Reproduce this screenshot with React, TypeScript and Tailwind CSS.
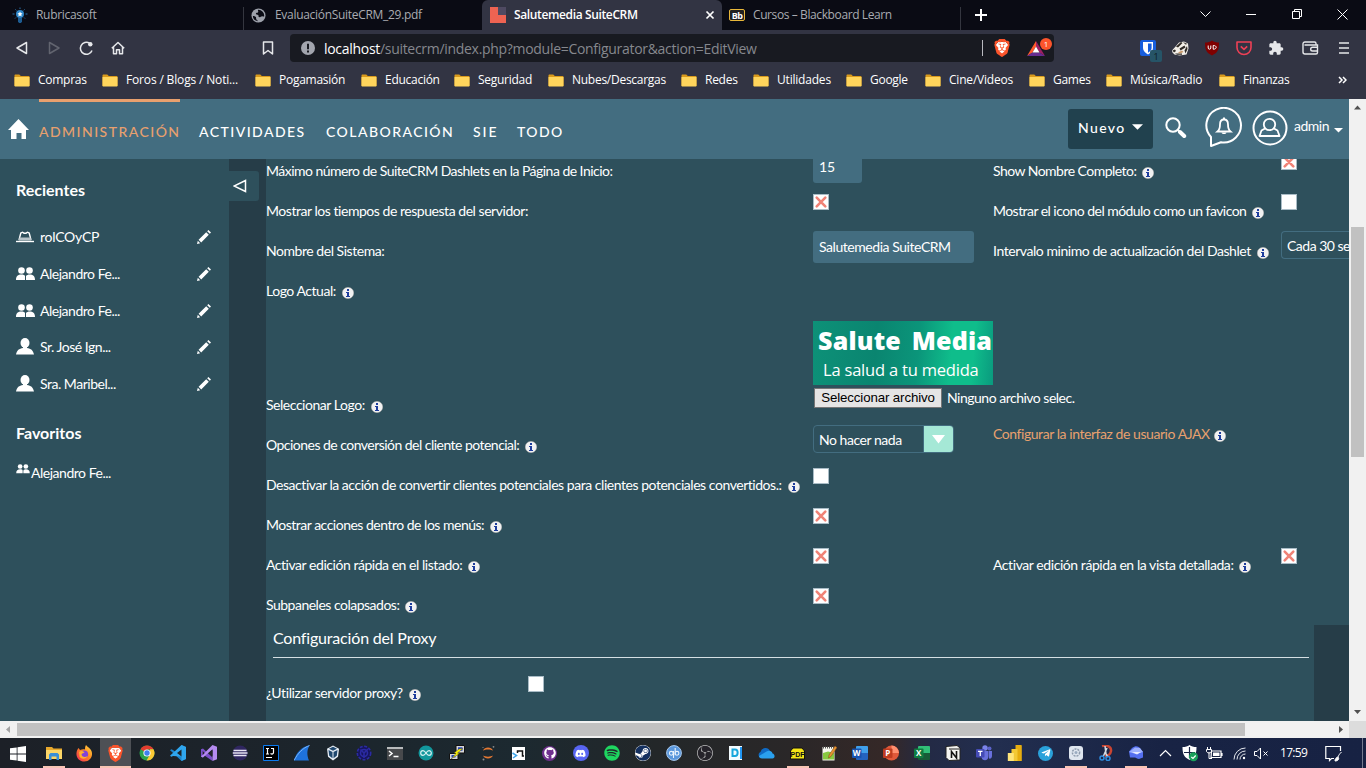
import React from "react";
import { FaWindows, FaDiscord, FaSpotify, FaSteam, FaGithub, FaTelegramPlane } from "react-icons/fa";
import { MdExtension } from "react-icons/md";
import { SiBrave, SiObsstudio } from "react-icons/si";
import { VscVscode } from "react-icons/vsc";

type Kids = { children?: React.ReactNode };

/* ---------- browser chrome ---------- */

function BraveLion({ className }: { className: string }) {
  return (
    <span className={`grid ${className}`}>
      <svg viewBox="0 0 24 24" className="col-start-1 row-start-1 size-full">
        <path d="M7 4h10l4 4-3 10-6 4-6-4L3 8z" fill="#fff" />
      </svg>
      <SiBrave className="col-start-1 row-start-1 size-full text-[#fb542b]" />
    </span>
  );
}

function TabBar() {
  return (
    <div className="flex h-[30px] bg-[#0a0b14] text-[12px] text-[#a9abb1]">
      <div className="flex w-[243px] items-center pl-3">
        <svg width="16" height="16" viewBox="0 0 16 16">
          <circle cx="8" cy="7" r="4" fill="#2f87c9" />
          <path d="M6 11h4v3.500l-1 1.500H7l-1-1.500z" fill="#1d5c92" />
          <path d="M8 4.500l.8 1.600 1.700.3-1.200 1.200.3 1.800L8 8.600l-1.600.8.3-1.800-1.200-1.200 1.700-.3z" fill="#fff" />
          <path d="M8 .5v1.500M3.400 2.400l1 1M12.600 2.400l-1 1M.5 7h2M13.500 7h2M3 11.500l1-1M13 11.500l-1-1" stroke="#2b6ea5" />
        </svg>
        <span className="ml-2 tracking-[-0.3px]">Rubricasoft</span>
      </div>
      <div className="mt-[7px] h-[23px] w-px bg-[#34363f]" />
      <div className="flex w-[238px] items-center pl-[7px]">
        <svg width="15" height="15" viewBox="0 0 16 16">
          <circle cx="8" cy="8" r="7.500" fill="#9da1ab" />
          <path d="M7.500 1.800c-.5 1.200.8 1.700 0 2.600s-2 .3-2.300 1.600c-.2 1 1.700.7 2.500 1.500s-.2 1.600.8 2.200c1 .7 2.300-1.200 3.500-1 1 .2 1.600.6 2 .3A6.300 6.300 0 0 0 7.500 1.800zM2 8.500c1 .2 2.600.2 3.200 1.200.6 1.100-.3 1.900.8 2.700.8.6 1.400.9 1.500 1.800A6.200 6.200 0 0 1 2 8.500z" fill="#0a0b14" />
        </svg>
        <span className="ml-[9px] tracking-[-0.3px]">EvaluaciónSuiteCRM_29.pdf</span>
      </div>
      <div className="flex w-[240px] items-center rounded-t-[6px] bg-[#323443] pl-2 text-white">
        <svg width="16" height="16" viewBox="0 0 16 16">
          <path d="M0 0h8v8h8v8H0z" fill="#ee6352" />
          <path d="M8 0h8v8H8z" fill="#4f4a62" />
        </svg>
        <span className="ml-2 w-[191px] font-semibold tracking-[-0.37px]">Salutemedia SuiteCRM</span>
        <svg width="10" height="10" viewBox="0 0 10 10">
          <path d="M1.500 1.500l7 7M8.500 1.500l-7 7" stroke="#fff" strokeWidth="1.700" />
        </svg>
      </div>
      <div className="flex w-[238px] items-center pl-[7px]">
        <span className="flex h-3 w-4 items-center justify-center rounded-[2px] border border-[#e8b73a] bg-[#222] text-[9px] font-bold leading-none tracking-[-0.5px] text-white">Bb</span>
        <span className="ml-2 tracking-[-0.4px]">Cursos – Blackboard Learn</span>
      </div>
      <div className="mt-[7px] h-[23px] w-px bg-[#34363f]" />
      <svg className="ml-[14px] mt-[9px]" width="12" height="12" viewBox="0 0 12 12">
        <path d="M6 0v12M0 6h12" stroke="#fff" strokeWidth="2" />
      </svg>
      <svg className="ml-auto mr-[17px] mt-2" width="150" height="12" viewBox="0 0 150 12" fill="none" stroke="#fff">
        <path d="M1.500 3.500l5 5 5-5M47 6.500h10M93.500 3.500h7v7h-7zM95.500 3.500v-2h7v7H100.500M138.500 1.500l10 10M148.500 1.500l-10 10" />
      </svg>
    </div>
  );
}

function Toolbar() {
  return (
    <div className="flex h-9 items-center bg-[#323443]">
      <svg className="ml-[14px] shrink-0" width="120" height="16" viewBox="0 0 120 16" fill="none" stroke="#e6e7ea" strokeWidth="1.500" strokeLinejoin="round">
        <path d="M12.500 2.500v11L3 8z" />
        <path d="M35.500 2.500v11L45 8z" stroke="#62646f" />
        <path d="M78 10.500a6 6 0 1 1-2.500-7.300" />
        <circle cx="76.300" cy="4.200" r="2.200" fill="#e6e7ea" stroke="none" />
        <path d="M97.800 8.300L104 2.500l6.200 5.800M99.500 7v6.800h3v-4h3v4h3V7" />
      </svg>
      <svg className="ml-[128px] shrink-0" width="12" height="14" viewBox="0 0 12 14" fill="none" stroke="#e6e7ea" strokeWidth="1.500" strokeLinejoin="round">
        <path d="M1.500 1h9v12L6 9.500 1.500 13z" />
      </svg>
      <div className="ml-4 flex h-7 w-[764px] items-center rounded-[4px] bg-[#181a21]">
        <svg className="ml-[11px]" width="14" height="14" viewBox="0 0 14 14">
          <circle cx="7" cy="7" r="7" fill="#a2a5ae" />
          <path d="M7 2.800v5.400M7 9.500v2" stroke="#181a21" strokeWidth="2" />
        </svg>
        <span className="ml-[9px] text-[14px] tracking-[-0.3px] text-[#86888e]"><span className="text-white">localhost</span>/suitecrm/index.php?module=Configurator&amp;action=EditView</span>
        <span className="ml-auto h-4 w-px bg-[#b9bac0]" />
        <BraveLion className="ml-[10px] size-[18px]" />
        <span className="relative ml-[16px] mr-[9px] h-[18px] w-[18px]">
          <svg width="18" height="18" viewBox="0 0 18 18">
            <path d="M9 2v5.500L5.500 13.500 0 17z" fill="#ff5a2b" />
            <path d="M9 2l9 15-5.500-3.500L9 7.500z" fill="#9e1f63" />
            <path d="M0 17l5.500-3.500h7L18 17z" fill="#662d91" />
            <path d="M9 7.500l3.500 6h-7z" fill="#fff" />
          </svg>
          <span className="absolute left-[13px] top-[-1px] flex size-3 items-center justify-center rounded-full bg-[#fb542b] text-[8px] leading-none text-white">1</span>
        </span>
      </div>
      <div className="ml-[86px] flex items-center">
        <span className="relative size-4">
          <svg width="16" height="16" viewBox="0 0 16 16">
            <rect width="16" height="16" rx="2" fill="#175ddc" />
            <path d="M3 2h10v6c0 3-2.500 5-5 6.500C5.500 13 3 11 3 8z" fill="#fff" />
            <path d="M8 3.500h3.600V8c0 2-1.800 3.600-3.600 4.800z" fill="#175ddc" />
          </svg>
          <span className="absolute left-[10px] top-[10px] flex size-3 items-center justify-center rounded-[2px] bg-[#265467] text-[9px] leading-none text-[#0c1a22]">1</span>
        </span>
        <svg className="ml-4" width="17" height="15" viewBox="0 0 17 15">
          <path d="M0 9.500L4 5l3-3.500L12 .5l4 2 .5 5-2 6-7 1-5-1-2-2z" fill="#f3efe9" />
          <path d="M4 5.500l5-4.500 1.500 1L6 6.500zM11 1l4.500 2-2 .5zM7.500 7.500l5-3 1 2-5 3zM.5 9.500l2.500-1 1 1.500-2 1.500zM12.500 9.500L15 5l.5 3-2 4.500zM3 12.500h7v1.200H5z" fill="#2f2a26" />
          <path d="M6 11.500l4-2 1.500 1.500-3.500 1.500z" fill="#c79668" />
        </svg>
        <svg className="ml-[15px]" width="16" height="16" viewBox="0 0 16 16">
          <path d="M8 .5c2 1.500 4 2 7 2 0 7-1 10-7 13-6-3-7-6-7-13 3 0 5-.5 7-2z" fill="#800000" />
          <path d="M4.200 5.500v2.500c0 1.600 2.600 1.600 2.600 0V5.500M9.200 5.500v3.700c4 .2 4-3.900 0-3.700z" fill="none" stroke="#fff" />
        </svg>
        <svg className="ml-4" width="16" height="16" viewBox="0 0 16 16" fill="none" stroke="#ef4056" strokeWidth="1.600" strokeLinejoin="round">
          <path d="M1 2h14v5.500a7 7 0 0 1-14 0zM4.800 6.300L8 9.300l3.200-3" />
        </svg>
        <MdExtension className="ml-4 size-4 text-[#e6e7ea]" />
        <svg className="ml-[18px]" width="17" height="16" viewBox="0 0 17 16" fill="none" stroke="#e6e7ea" strokeWidth="1.400">
          <path d="M14 5V3.500C14 2.500 13.500 2 12.500 2H3C1.500 2 1 3 1 4v8c0 1.300.7 2 2 2h11c1 0 1.500-.5 1.500-1.500V5H2.500M15.500 7.300H10.500c-1.200 0-1.800.9-1.800 1.900s.6 1.800 1.800 1.800h5" />
        </svg>
        <svg className="ml-[20px]" width="10" height="12" viewBox="0 0 10 12">
          <path d="M0 1h10M0 6h10M0 11h10" stroke="#e6e7ea" strokeWidth="1.600" />
        </svg>
      </div>
    </div>
  );
}

function Bookmark({ w, children }: Kids & { w: string }) {
  return (
    <div className={`flex shrink-0 items-center ${w}`}>
      <svg className="mr-2 shrink-0" width="16" height="13" viewBox="0 0 16 13">
        <path d="M.5 1.500c0-.8.4-1 1-1h3.800l1.500 1.500h8c.5 0 .7.3.7.800V12H.5z" fill="#d99a1c" />
        <path d="M.5 3h15v8.500c0 .7-.3 1-1 1h-13c-.7 0-1-.3-1-1z" fill="#ffd55c" />
      </svg>
      <span className="whitespace-nowrap">{children}</span>
    </div>
  );
}

function Bookmarks() {
  return (
    <div className="flex h-[33px] items-center bg-[#323443] pb-[5px] pl-[14px] text-[12px] tracking-[-0.27px] text-white">
      <Bookmark w="w-[88px]">Compras</Bookmark>
      <Bookmark w="w-[153px] tracking-[-0.16px]">Foros / Blogs / Noti...</Bookmark>
      <Bookmark w="w-[106px]">Pogamasión</Bookmark>
      <Bookmark w="w-[93px]">Educación</Bookmark>
      <Bookmark w="w-[94px]">Seguridad</Bookmark>
      <Bookmark w="w-[133px]">Nubes/Descargas</Bookmark>
      <Bookmark w="w-[72px]">Redes</Bookmark>
      <Bookmark w="w-[93px] tracking-[-0.2px]">Utilidades</Bookmark>
      <Bookmark w="w-[79px]">Google</Bookmark>
      <Bookmark w="w-[104px] tracking-[-0.2px]">Cine/Videos</Bookmark>
      <Bookmark w="w-[77px]">Games</Bookmark>
      <Bookmark w="w-[113px]">Música/Radio</Bookmark>
      <Bookmark w="w-[119px]">Finanzas</Bookmark>
      <svg width="9" height="8" viewBox="0 0 9 8" fill="none" stroke="#fff" strokeWidth="1.500">
        <path d="M1 1l3 3-3 3M5 1l3 3-3 3" />
      </svg>
    </div>
  );
}

/* ---------- CRM header ---------- */

function CrmHeader() {
  return (
    <header className="flex h-[60px] bg-[#436d80] text-white">
      <svg className="ml-2 mt-5 shrink-0" width="21" height="20" viewBox="0 0 21 20">
        <path d="M10.500 0L21 11h-3v9h-4.500v-6h-5v6H3v-9H0z" fill="#fff" />
      </svg>
      <nav className="ml-[10px] flex text-[14px] font-medium leading-[20px] tracking-[1.450px]">
        <span className="w-[141px] border-t-[3px] border-[#e8a06e] pt-5 text-[#e8a06e]">ADMINISTRACIÓN</span>
        <span className="ml-[19px] w-[127px] pt-[23px]">ACTIVIDADES</span>
        <span className="w-[147px] pt-[23px]">COLABORACIÓN</span>
        <span className="w-[44px] pt-[23px] tracking-[1.900px]">SIE</span>
        <span className="pt-[23px]">TODO</span>
      </nav>
      <div className="ml-auto flex">
        <button className="mt-[10px] flex h-10 w-[85px] items-center rounded-[3px] bg-[#21414e] pl-[10px] text-[14px] font-medium tracking-[1.400px]">
          <span className="w-[54px] pb-1 text-left">Nuevo</span>
          <svg className="mb-1" width="11" height="6" viewBox="0 0 10 5"><path d="M0 0h10L5 5z" fill="#fff" /></svg>
        </button>
        <svg className="ml-3 mt-[18px]" width="22" height="22" viewBox="0 0 22 22" fill="none" stroke="#fff">
          <circle cx="8" cy="8" r="6.700" strokeWidth="2" />
          <path d="M13 13l2 2" strokeWidth="2" />
          <path d="M15 15l4.200 4" strokeWidth="4" strokeLinecap="round" />
        </svg>
        <svg className="ml-[18px] mt-2" width="38" height="41" viewBox="0 0 38 41" fill="none" stroke="#fff" strokeWidth="2">
          <path d="M6 39V30A17.300 17.300 0 1 1 16 35.300L6 39z" strokeLinejoin="round" />
          <path d="M12.500 24.500c2.500-2 2.500-4 2.500-7 0-3 1.500-5 4-5s4 2 4 5c0 3 0 5 2.500 7z" strokeWidth="1.800" />
          <path d="M16.500 25.500h5c-.5 2-4.500 2-5 0zM18 10.500h2v2h-2z" fill="#fff" stroke="none" />
        </svg>
        <svg className="ml-[9px] mt-[11px]" width="36" height="36" viewBox="0 0 36 36" fill="none" stroke="#fff">
          <circle cx="18" cy="18" r="16.500" strokeWidth="2" />
          <circle cx="17.500" cy="14.500" r="5.700" strokeWidth="1.800" />
          <path d="M13 18.500l-3.500 2-2 5.500h20l-2-5.500-3.500-2" strokeWidth="1.800" strokeLinejoin="round" />
        </svg>
        <span className="ml-[6px] mt-[17px] w-10 text-[14px] leading-[20px] tracking-[-0.500px]">admin</span>
        <svg className="mr-[6px] mt-[29px]" width="9" height="5" viewBox="0 0 9 5"><path d="M0 0h9L4.500 4.500z" fill="#fff" /></svg>
      </div>
    </header>
  );
}

/* ---------- sidebar ---------- */

function People({ className }: { className: string }) {
  return (
    <svg className={className} viewBox="0 0 19 14" fill="#fff">
      <circle cx="5.500" cy="3.500" r="3.300" />
      <circle cx="13.500" cy="3.500" r="3.300" />
      <path d="M0 13c0-4 2-5.500 5.500-5.500 2 0 3 .5 3.500 1.500L9 13zM10 13V9c1-1 2-1.500 3.500-1.500 3.500 0 5.500 1.500 5.500 5.500z" />
    </svg>
  );
}

function Person() {
  return (
    <svg width="18" height="18" viewBox="0 0 18 18" fill="#fff">
      <ellipse cx="9" cy="5" rx="4.500" ry="5" />
      <path d="M7 8h4v2c4 .8 6 2 7 6.500H0C1 12 3 10.800 7 10z" />
    </svg>
  );
}

function RoleHat() {
  return (
    <svg width="18" height="12" viewBox="0 0 18 12">
      <path d="M3 9L4.800 2 6.500 1.200l1.500 1h2l1.500-1 1.700.8L15 9" fill="none" stroke="#fff" strokeWidth="1.400" />
      <path d="M3.500 6.500h11l.8 3h-12.600z" fill="#b7c3c8" />
      <path d="M0 10.500h18" stroke="#fff" strokeWidth="1.400" />
    </svg>
  );
}

function Pencil() {
  return (
    <svg width="14" height="14" viewBox="0 0 14 14" fill="#fff">
      <path d="M0 14l.8-3.200 2.400 2.400zM1.600 9.800L9.200 2.200l2.600 2.600-7.600 7.600zM10.200 1.200L11.400 0 14 2.600 12.800 3.800z" />
    </svg>
  );
}

function Recent({ icon, children }: Kids & { icon: React.ReactNode }) {
  return (
    <li className="flex h-[36.700px] items-center pl-4 pr-[18px]">
      <span className="flex w-6 shrink-0 items-center">{icon}</span>
      <span className="flex-1">{children}</span>
      <Pencil />
    </li>
  );
}

function Sidebar() {
  return (
    <aside className="w-[229px] shrink-0 bg-[#2e505c] text-[14px] leading-[20px] tracking-[-0.480px] text-white">
      <h2 className="pl-4 pt-[21px] text-[16px] font-bold tracking-normal">Recientes</h2>
      <ul className="mt-[19px]">
        <Recent icon={<RoleHat />}><span className="tracking-[-0.250px]">rolCOyCP</span></Recent>
        <Recent icon={<People className="h-[14px] w-[19px]" />}>Alejandro Fe...</Recent>
        <Recent icon={<People className="h-[14px] w-[19px]" />}>Alejandro Fe...</Recent>
        <Recent icon={<Person />}>Sr. José Ign...</Recent>
        <Recent icon={<Person />}>Sra. Maribel...</Recent>
      </ul>
      <h2 className="pl-4 pt-[21px] text-[16px] font-bold tracking-normal">Favoritos</h2>
      <div className="mt-[20px] flex pl-4">
        <People className="mt-px h-[10px] w-[14px]" />
        <span className="ml-[1px]">Alejandro Fe...</span>
      </div>
    </aside>
  );
}

/* ---------- configuration form ---------- */

function Info({ className = "ml-[6px]" }: { className?: string }) {
  return (
    <svg className={`mt-[3px] shrink-0 ${className}`} width="12" height="12" viewBox="0 0 12 12">
      <circle cx="6" cy="6" r="5.800" fill="#f1f1f1" stroke="#999" strokeWidth=".4" />
      <path d="M5 2h2v2H5zM4 5h3v4h1v1H4V9h1V6H4z" fill="#1d3c9c" />
    </svg>
  );
}

function Check({ on = false }: { on?: boolean }) {
  return (
    <span className="mt-[3px] flex size-4 items-center justify-center border border-[#a9bcc6] bg-white">
      {on && (
        <svg width="14" height="14" viewBox="0 0 14 14" stroke="#f08377" strokeWidth="2.600" strokeLinecap="round">
          <path d="M2.700 2.700l8.600 8.600M11.300 2.700l-8.600 8.600" />
        </svg>
      )}
    </span>
  );
}

function Label({ children, info = false, fit = "tracking-[-0.460px]" }: Kids & { info?: boolean; fit?: string }) {
  return (
    <div className="flex h-5 items-center whitespace-nowrap pt-[20px]">
      <span className={fit}>{children}</span>
      {info && <Info />}
    </div>
  );
}

function Row({ children, className = "h-10" }: Kids & { className?: string }) {
  return <div className={`grid shrink-0 grid-cols-[547px_180px_288px_68px] ${className}`}>{children}</div>;
}

function Form() {
  return (
    <main className="flex w-[1083px] flex-col overflow-hidden bg-[#2e505c] text-[14px] leading-[20px] text-white">
      <div className="-mt-2 flex flex-col">
        <Row>
          <Label fit="tracking-[-0.530px]">Máximo número de SuiteCRM Dashlets en la Página de Inicio:</Label>
          <div className="h-8 w-[49px] rounded-[3px] bg-[#436d80] pl-[6px] leading-[32px]">15</div>
          <Label info fit="tracking-[-0.530px]">Show Nombre Completo:</Label>
          <Check on />
        </Row>
        <Row>
          <Label>Mostrar los tiempos de respuesta del servidor:</Label>
          <Check on />
          <Label info fit="tracking-[-0.550px]">Mostrar el icono del módulo como un favicon</Label>
          <Check />
        </Row>
        <Row>
          <Label>Nombre del Sistema:</Label>
          <div className="h-8 w-[161px] rounded-[3px] bg-[#436d80] pl-[6px] leading-[32px] tracking-[-0.450px]">Salutemedia SuiteCRM</div>
          <Label info fit="tracking-[-0.440px]">Intervalo minimo de actualización del Dashlet</Label>
          <div className="h-7 whitespace-nowrap rounded-l-[4px] border border-r-0 border-[#436d80] pl-[5px] leading-[28px] tracking-[-0.500px]">Cada 30 se</div>
        </Row>
        <Row>
          <Label info>Logo Actual:</Label>
        </Row>
      </div>
      <Row className="h-[74px] pt-[10px]">
        <div className="col-start-2 flex h-16 flex-col items-start bg-[linear-gradient(95deg,#0d9178_0%,#0a8570_35%,#0b957a_58%,#0fbd8b_76%,#0fbd8b_88%,#0a9a7e_100%)] whitespace-nowrap pl-[5px]">
          <span className="h-[37px] font-['Open_Sans'] text-[25px] font-extrabold leading-[39px] tracking-[0.200px] [word-spacing:4px]">Salute Media</span>
          <span className="pl-[5px] font-['Open_Sans'] text-[16.500px] leading-[24px] tracking-[-0.200px]">La salud a tu medida</span>
        </div>
      </Row>
      <Row>
        <Label info>Seleccionar Logo:</Label>
        <div className="flex items-start whitespace-nowrap pl-[1px] pt-[3px]">
          <button className="h-[20px] w-[128px] shrink-0 border border-[#767676] bg-[#e5e5e5] font-['Liberation_Sans'] text-[13.300px] leading-[18px] tracking-[-0.130px] text-black">Seleccionar archivo</button>
          <span className="ml-[5px] leading-[19px] tracking-[-0.500px]">Ninguno archivo selec.</span>
        </div>
      </Row>
      <Row>
        <Label info fit="tracking-[-0.530px]">Opciones de conversión del cliente potencial:</Label>
        <div className="flex h-7 w-[141px] overflow-hidden rounded-[4px] border border-[#436d80]">
          <span className="w-[109px] pl-[5px] leading-[28px] tracking-[-0.460px]">No hacer nada</span>
          <span className="flex flex-1 items-center justify-center border-l border-[#436d80] bg-[#a5e8d6]">
            <svg width="13" height="9" viewBox="0 0 13 9"><path d="M0 0h13L6.500 8.500z" fill="#fff" /></svg>
          </span>
        </div>
        <div className="-mt-px flex h-5 items-center whitespace-nowrap text-[#e8a06e]">
          <span className="tracking-[-0.440px]">Configurar la interfaz de usuario AJAX</span>
          <Info className="ml-1" />
        </div>
      </Row>
      <Row>
        <Label info>Desactivar la acción de convertir clientes potenciales para clientes potenciales convertidos.:</Label>
        <Check />
      </Row>
      <Row>
        <Label info fit="tracking-[-0.500px]">Mostrar acciones dentro de los menús:</Label>
        <Check on />
      </Row>
      <Row>
        <Label info>Activar edición rápida en el listado:</Label>
        <Check on />
        <Label info fit="tracking-[-0.430px]">Activar edición rápida en la vista detallada:</Label>
        <Check on />
      </Row>
      <Row>
        <Label info fit="tracking-[-0.500px]">Subpaneles colapsados:</Label>
        <Check on />
      </Row>
      <div className="flex h-24 shrink-0">
        <section className="w-[1048px]">
          <h3 className="ml-[7px] mr-[5px] h-[33px] border-b border-[#d5dfe3] text-[16px] leading-[26px] tracking-[-0.180px]">Configuración del Proxy</h3>
          <div className="flex pt-[15px]">
            <div className="w-[262px]"><Label info fit="tracking-[-0.400px]">¿Utilizar servidor proxy?</Label></div>
            <Check />
          </div>
        </section>
        <div className="flex-1 bg-[#263d48]" />
      </div>
    </main>
  );
}

function VScroll() {
  return (
    <div className="flex w-[17px] shrink-0 flex-col items-center bg-[#f1f1f1]">
      <svg className="mt-[6px]" width="7" height="5" viewBox="0 0 7 5"><path d="M0 4.500L3.500 .5 7 4.500z" fill="#505050" /></svg>
      <div className="mt-[117px] h-[230px] w-[13px] bg-[#c1c1c1]" />
      <svg className="mb-[7px] mt-auto" width="7" height="4" viewBox="0 0 7 4"><path d="M0 0h7L3.500 4z" fill="#505050" /></svg>
    </div>
  );
}

function HScroll() {
  return (
    <div className="flex h-[17px] shrink-0 items-center bg-[#f1f1f1]">
      <svg className="ml-[6px]" width="4" height="7" viewBox="0 0 4 7"><path d="M4 0v7L0 3.500z" fill="#a3a3a3" /></svg>
      <div className="ml-[7px] h-[13px] w-[1228px] bg-[#c1c1c1]" />
      <svg className="ml-[94px]" width="4" height="7" viewBox="0 0 4 7"><path d="M0 0v7l4-3.500z" fill="#505050" /></svg>
      <div className="ml-auto h-full w-[17px] bg-[#dcdcdc]" />
    </div>
  );
}

/* ---------- Windows taskbar ---------- */

function Pinned({ children, open = false, active = false, narrow = false }: Kids & { open?: boolean; active?: boolean; narrow?: boolean }) {
  return (
    <div className={`flex h-[30px] shrink-0 flex-col items-center ${narrow ? "w-[30px]" : "w-[31px]"} ${active ? "bg-[#4d5055]" : ""}`}>
      <div className="flex h-7 items-center pt-[2px]">{children}</div>
      {(open || active) && <div className={`h-[2px] bg-[#f8c4b4] ${active ? "w-full" : "w-[22px]"}`} />}
    </div>
  );
}

function Icon({ children }: Kids) {
  return <svg width="16" height="16" viewBox="0 0 16 16">{children}</svg>;
}

function Office({ dark, main, light, letter }: { dark: string; main: string; light: string; letter: string }) {
  return (
    <Icon>
      <path d="M5 1h10a1 1 0 0 1 1 1v6H4V2a1 1 0 0 1 1-1z" fill={light} />
      <path d="M4 8h12v6a1 1 0 0 1-1 1H5a1 1 0 0 1-1-1z" fill={main} />
      <rect x="0" y="3.500" width="9.500" height="9.500" rx="1" fill={dark} />
      <text x="4.700" y="11.200" textAnchor="middle" fontSize="8" fontWeight="700" fill="#fff" fontFamily="Open Sans">{letter}</text>
    </Icon>
  );
}

function Taskbar() {
  return (
    <footer className="flex h-[30px] shrink-0 bg-[linear-gradient(90deg,#1c2027_0%,#1c242b_20%,#1c2930_38%,#232729_48%,#2a2728_58%,#352827_65%,#232a45_68%,#222e4f_73%,#182344_85%,#172243_100%)]">
      <div className="flex w-[38px] items-center justify-center pt-px pr-[2px]">
        <svg width="16" height="16" viewBox="0 0 16 16" fill="#fff"><path d="M0 2.300l6.700-.9v6.200H0zM7.500 1.200L16 0v7.600H7.500zM0 8.400h6.700v6.200L0 13.700zM7.500 8.400H16V16l-8.500-1.200z" /></svg>
      </div>
      <Pinned open><Icon><path d="M0 2h6l1.500 1.500H16V6H0z" fill="#e8a92d" /><path d="M0 5h16v9H0z" fill="#fcd667" /><path d="M3 14V9.500l1.500-1.500h7L13 9.500V15h-2.500v-3.500h-5V15H3z" fill="#3a8fd8" /></Icon></Pinned>
      <Pinned>
        <svg width="17" height="17" viewBox="0 0 17 17">
          <defs><linearGradient id="ff" x1="1" y1="0" x2="0" y2="1"><stop offset="0" stopColor="#ffe14a" /><stop offset=".45" stopColor="#ff8a1f" /><stop offset="1" stopColor="#f0255c" /></linearGradient></defs>
          <path d="M10 0c1.500 2 4.500 3.500 5.500 6 2 6-2 10.500-7 10.500S0 13 .5 8C.7 6 1.500 4 2.500 3L4 5c2-1 4-1 5-.5C9 3 9 1.500 10 0z" fill="url(#ff)" />
          <circle cx="8.300" cy="9.200" r="3.800" fill="#8143d8" />
          <path d="M3 7c2-1.500 4-1 5.500.5-1 1-2.500.5-3 2 1 3 4 3 6 1.500-1 3-6 4-8 .5z" fill="#ffb02e" />
        </svg>
      </Pinned>
      <Pinned active><BraveLion className="size-[17px]" /></Pinned>
      <Pinned><Icon><circle cx="8" cy="8" r="7.500" fill="#2ba24c" /><path d="M8 8L1.500 4.300A7.500 7.500 0 0 1 14.500 4.300L8 4.500z" fill="#e33b2e" /><path d="M14.500 4.300A7.500 7.500 0 0 1 7.500 15.500L11 9.500V4.300z" fill="#fcc934" /><circle cx="8" cy="8" r="3.600" fill="#fff" /><circle cx="8" cy="8" r="2.700" fill="#3f80ee" /></Icon></Pinned>
      <Pinned>
        <Icon>
          <path d="M11.500 0L16 2v12l-4.500 2L1.500 6.500 0 5.200l1.300-1L3 5l8.500 6.500z" fill="#1c83cc" />
          <path d="M11.500 0L16 2v12l-4.500 2v-4.500L3 11l-1.700.8-1.300-1z" fill="#2fa6ee" />
          <path d="M11.500 4.500v7L7 8z" fill="#1d242b" />
        </Icon>
      </Pinned>
      <Pinned>
        <Icon>
          <path d="M0 4.300L2 3.500l9.500 9V16L2 9.500v3l-2-.8z" fill="#7b4fc9" />
          <path d="M11.500 0L16 1.800v12.400L11.500 16V4.300L2 12.500l-2-.8L3.500 8z" fill="#b58bf0" />
          <path d="M1.700 6v4l2-2zM8 8l3.500-3v6z" fill="#24242c" />
        </Icon>
      </Pinned>
      <Pinned><Icon><circle cx="8.200" cy="8" r="7.500" fill="#2f2660" /><path d="M1.500 5.500h13M.8 8h14.700M1.500 10.500h13" stroke="#e8e4f2" strokeWidth="1.300" /></Icon></Pinned>
      <Pinned><Icon><path d="M.5.5h15v15H.5z" fill="#000" stroke="#0b7bf0" /><path d="M3 3.500h3M4.500 3.500V9M3 9h3M8 3.500h3M10.500 3.500V7.500c0 1.500-1.500 2-3 1M3 12.500h6" stroke="#fff" strokeWidth="1.200" fill="none" /></Icon></Pinned>
      <Pinned><Icon><path d="M0 15.500C2 8 8 1 15.500.5c-3 5-2.500 10-.5 15z" fill="#1e72dc" /><path d="M0 15.500C4 8 9 3 15.500.5" stroke="#78b3f4" fill="none" /></Icon></Pinned>
      <Pinned><Icon><path d="M8 .5l6 3.200-1 8L8 15.500l-5-3.800-1-8z" fill="#e6edf5" /><path d="M3.500 5l4 2v6.300l-3.300-2.600zM12.500 5l-4 2v6.300l3.300-2.600zM8 1.800l4 2-4 2-4-2z" fill="#20486f" /></Icon></Pinned>
      <Pinned><Icon><g fill="#16155e" stroke="#2b2aa3" strokeWidth="1.600"><circle cx="8" cy="8" r="6.700" strokeDasharray="3 1.500" /><circle cx="8" cy="8" r="3.500" /><path d="M8 8l4-4M8 8L4.500 4.500M8 8v5" /></g></Icon></Pinned>
      <Pinned><svg width="16" height="13" viewBox="0 0 16 13"><path d="M0 0h16v13H0z" fill="#47494c" /><path d="M0 0h16v2H0z" fill="#b9bbbd" /><path d="M2 4l3 2.500L2 9M6.500 9.500h5" stroke="#fff" strokeWidth="1.500" fill="none" /></svg></Pinned>
      <Pinned><Icon><circle cx="8" cy="8" r="7.500" fill="#12979c" /><path d="M8 8C6.500 5.800 5.800 5.700 5 5.700a2.300 2.300 0 0 0 0 4.600c.8 0 1.500-.1 3-2.300s2.200-2.300 3-2.300a2.300 2.300 0 0 1 0 4.600c-.8 0-1.500-.1-3-2.300z" fill="none" stroke="#d9f1f2" strokeWidth="1.200" /></Icon></Pinned>
      <Pinned><Icon><path d="M7 .5h8.500v7.500H7zM.5 8.500H9v6H.5z" fill="#d8d8d8" stroke="#111" /><path d="M9 2.200h4.500v3.500H9zM2.500 10h4v2.500h-4z" fill="#2446bd" /><path d="M14 3.500L8.500 8l2 .5L2 14l5-5.500L5 8l5-4z" fill="#fff500" stroke="#333" strokeWidth=".4" /></Icon></Pinned>
      <Pinned><Icon><path d="M3 5.500C4.500 1.500 11.500 1.500 13 5.500 10.500 4 5.500 4 3 5.500zM3 10.500c1.500 4 8.500 4 10 0-2.500 1.500-7.500 1.500-10 0z" fill="#e57832" /><circle cx="13.500" cy="1.800" r=".9" fill="#8d8d8d" /><circle cx="3.500" cy="14.500" r="1" fill="#8d8d8d" /><circle cx="3" cy="2.500" r=".6" fill="#8d8d8d" /></Icon></Pinned>
      <Pinned><svg width="13" height="13" viewBox="0 0 13 13"><path d="M0 0h13v13H0z" fill="#fff" /><path d="M5.500 6V4h5v5H12" stroke="#111" strokeWidth="1.500" fill="none" /><path d="M.5 6l4 2.500L1 11" stroke="#3fa4e8" strokeWidth="1.500" fill="none" /></svg></Pinned>
      <Pinned><span className="flex size-[15px] items-center justify-center rounded-full bg-[#70308f]"><FaGithub className="size-3 text-white" /></span></Pinned>
      <Pinned><span className="flex size-4 items-center justify-center rounded-full bg-[#5865f2]"><FaDiscord className="size-[11px] text-white" /></span></Pinned>
      <Pinned><FaSpotify className="size-4 text-[#1ed760]" /></Pinned>
      <Pinned><FaSteam className="size-4 rounded-full bg-white text-[#14305f]" /></Pinned>
      <Pinned><Icon><circle cx="8" cy="8" r="7.400" fill="#5a97dc" stroke="#a9caef" /><g fill="none" stroke="#e8f2fc" strokeWidth="1.100"><circle cx="5.300" cy="8.300" r="1.900" /><path d="M7.500 6v7M9.200 3v7.300" /><circle cx="11" cy="8.300" r="1.900" /></g></Icon></Pinned>
      <Pinned><span className="flex size-4 items-center justify-center rounded-full bg-[#25232a]"><SiObsstudio className="size-4 text-[#bdbdbd]" /></span></Pinned>
      <Pinned><svg width="14" height="14" viewBox="0 0 14 14"><path d="M0 0h13v14H0z" fill="#f3fbff" /><path d="M11 1h2v12h-2z" fill="#2196f3" /><path d="M3.500 3.500H6c3.500 0 3.500 6.500 0 6.500H3.500z" fill="none" stroke="#17a6dc" strokeWidth="2" /></svg></Pinned>
      <Pinned><svg width="17" height="12" viewBox="0 0 17 12"><path d="M2.500 5A5 5 0 0 1 12 4l-6 5-5 .5C0 7.500 1 5.500 2.500 5z" fill="#0f6ac4" /><path d="M8.500 4.500C11 3 14 4 14.500 6.500 17 7 17.500 11 14.500 11.500H4c-2 0-3-1-3-2.500z" fill="#2aa0ee" /></svg></Pinned>
      <Pinned open><svg width="15" height="14" viewBox="0 0 15 14"><path d="M3 2h9l2.500 3v8h-14V5z" fill="#f6e516" stroke="#111" /><text x="7.500" y="11" fontSize="7" fontWeight="700" textAnchor="middle" fontFamily="Liberation Sans" fill="#111">PDF</text></svg></Pinned>
      <Pinned><Icon><path d="M1.500 2h12v13.500h-12z" fill="#f6f6ee" /><path d="M2 8l5-1.500L13 8v6.500H2z" fill="#88c940" /><path d="M2 2.500h11" stroke="#555" strokeWidth="2" strokeDasharray="1 1" /><path d="M14 1l2 1.500-6 9-2.500 1.500.5-3z" fill="#e59331" stroke="#7b4417" strokeWidth=".5" /></Icon></Pinned>
      <Pinned><Office dark="#1853b0" main="#2463c0" light="#40a0ec" letter="W" /></Pinned>
      <Pinned><Icon><circle cx="8.500" cy="8" r="7.500" fill="#e0593a" /><path d="M8.500 .5A7.500 7.500 0 0 1 16 8H8.500z" fill="#ff9070" /><rect x="0" y="3.500" width="9.500" height="9.500" rx="1" fill="#bf3c20" /><text x="4.700" y="11.200" textAnchor="middle" fontSize="8" fontWeight="700" fill="#fff" fontFamily="Open Sans">P</text></Icon></Pinned>
      <Pinned><Office dark="#107c41" main="#185c37" light="#31bf78" letter="X" /></Pinned>
      <Pinned><Icon><path d="M1 1.500l11-1 3 2.500v12l-11 .5-3-3z" fill="#f4f4f1" stroke="#222" /><path d="M4 4h10.500" stroke="#222" /><path d="M6.500 13V6.500l5 6.500V6" stroke="#111" strokeWidth="1.600" fill="none" /></Icon></Pinned>
      <Pinned><Icon><circle cx="13.500" cy="3.500" r="2" fill="#5b62c8" /><circle cx="9" cy="3" r="2.700" fill="#7b83eb" /><path d="M6 6h6.500v5c0 6-7 5-7 1zM13 6h3v5c0 2-1.500 3-3 2.500z" fill="#6870dc" /><rect x="0" y="4" width="8.500" height="8.500" rx="1" fill="#444bb4" /><path d="M2 6.300h4.500M4.250 6.300V11" stroke="#fff" strokeWidth="1.300" /></Icon></Pinned>
      <Pinned><Icon><path d="M8.500 0H14a.8.8 0 0 1 .8.800V16H8.500z" fill="#e6ad10" /><path d="M4.500 4h6v12h-6z" fill="#f3c935" /><path d="M.8 8h6v8h-6z" fill="#ffe57a" /></Icon></Pinned>
      <Pinned><span className="flex size-[15px] items-center justify-center rounded-full bg-[#2aa1da]"><FaTelegramPlane className="size-[10px] text-white" /></span></Pinned>
      <Pinned narrow open><svg width="14" height="14" viewBox="0 0 14 14"><rect width="14" height="14" rx="3" fill="#dfe6ef" /><circle cx="7" cy="6.500" r="3.600" fill="none" stroke="#8e9cae" strokeWidth="1.500" strokeDasharray="2 1" /><circle cx="7" cy="6.500" r="1.500" fill="#9aabc0" /></svg></Pinned>
      <Pinned narrow><Icon><path d="M4 1c5-1.500 9.500 1 9 5s-4 5-6 5" fill="none" stroke="#cb4532" strokeWidth="2.500" /><path d="M7 1l1 8 2 3M9 3L5 12" stroke="#d5dbe2" strokeWidth="1.500" fill="none" /><circle cx="4" cy="13" r="2" fill="none" stroke="#2e8ce0" strokeWidth="1.500" /><circle cx="10" cy="13.500" r="2" fill="none" stroke="#2e8ce0" strokeWidth="1.500" /></Icon></Pinned>
      <Pinned narrow open><svg width="14" height="14" viewBox="0 0 14 14"><path d="M0 5.500L3 2c4-3 7-1.500 8.500 1L14 6v5.500L10 13c-2 0-2-1-4-1.500H1z" fill="#546ff0" /><path d="M0 6l7 2 7-2-3-4-5-.5z" fill="#9eb1ff" /><path d="M3 6h9l-4 2.500z" fill="#e6eaff" /></svg></Pinned>
      <div className="flex items-center text-white">
        <svg className="ml-2" width="13" height="8" viewBox="0 0 13 8"><path d="M1 7l5.500-5.500L12 7" stroke="#fff" fill="none" strokeWidth="1.200" /></svg>
        <svg className="ml-[10px]" width="17" height="17" viewBox="0 0 17 17"><path d="M7.500 0c2 1.500 4 2 7 2 0 7-1.500 10-7 13C2 12 .5 9 .5 2c3 0 5-.5 7-2z" fill="#fff" /><path d="M7.500 2v11M2 7.500h11" stroke="#182344" strokeWidth="1.200" /><circle cx="11.500" cy="11.800" r="4.500" fill="#18a05a" /><path d="M9.300 12l1.700 1.500 2.700-3" stroke="#fff" fill="none" strokeWidth="1.200" /></svg>
        <svg className="ml-[7px]" width="17" height="13" viewBox="0 0 17 13"><path d="M5.500 4h9.500v6.500H5zM16 6v3" stroke="#fff" fill="none" strokeWidth="1.200" /><path d="M7 5.500h6.500v3.500H7z" fill="#fff" /><path d="M1.500 0v2.500M4.500 0v2.500M.5 2.500h5v2c-1 2-4 2-5 0zM3 5.500v6h3" stroke="#fff" fill="none" /></svg>
        <svg className="ml-[10px]" width="13" height="13" viewBox="0 0 13 13" fill="none" stroke="#e6e9ef"><path d="M1 12.500A11.500 11.500 0 0 1 12.500 1M4 12.500A8.500 8.500 0 0 1 12.500 4M7 12.500A5.500 5.500 0 0 1 12.500 7" /><circle cx="11" cy="11" r="1.200" fill="#fff" stroke="none" /></svg>
        <svg className="ml-[8px]" width="15" height="13" viewBox="0 0 15 13" fill="none" stroke="#fff"><path d="M.5 4.500H3L6.500 1v11L3 8.500H.5zM9.500 4.500l4 4M13.500 4.500l-4 4" /></svg>
        <span className="ml-[11px] w-[28px] whitespace-nowrap text-[12px] tracking-[-0.700px]">17:59</span>
        <svg className="ml-[17px]" width="17" height="17" viewBox="0 0 17 17" fill="none" stroke="#fff"><path d="M9 13.500H6.500L4.500 15.500V13.500H.8V1.500h14.700V6" strokeWidth="1.200" /><path d="M16.500 7c-2 2-3 3.500-3.500 5" /><path d="M10 16c0-2 1-3.500 3-4 1.500 1.500.5 4-3 4z" fill="#fff" /></svg>
        <span className="ml-[20px] h-full w-px bg-[#747b8f]" />
      </div>
    </footer>
  );
}

export default function App() {
  return (
    <div className="flex h-[768px] w-[1366px] flex-col overflow-hidden">
      <div className="font-['Open_Sans',sans-serif]">
        <TabBar />
        <Toolbar />
        <Bookmarks />
      </div>
      <div className="flex h-[622px] shrink-0 font-[Lato,sans-serif]">
        <div className="flex w-[1349px] shrink-0 flex-col">
          <CrmHeader />
          <div className="flex h-[562px]">
            <Sidebar />
            <div className="w-[37px] shrink-0 bg-[#263d48] pt-3">
              <div className="flex h-[30px] w-[30px] items-center rounded-r-[3px] bg-[#2e505c] pl-1">
                <svg width="14" height="14" viewBox="0 0 14 14"><path d="M12.500 1.500v11L1 7z" fill="none" stroke="#fff" strokeWidth="1.500" /></svg>
              </div>
            </div>
            <Form />
          </div>
        </div>
        <VScroll />
      </div>
      <HScroll />
      <div className="font-['Open_Sans',sans-serif]"><Taskbar /></div>
    </div>
  );
}
